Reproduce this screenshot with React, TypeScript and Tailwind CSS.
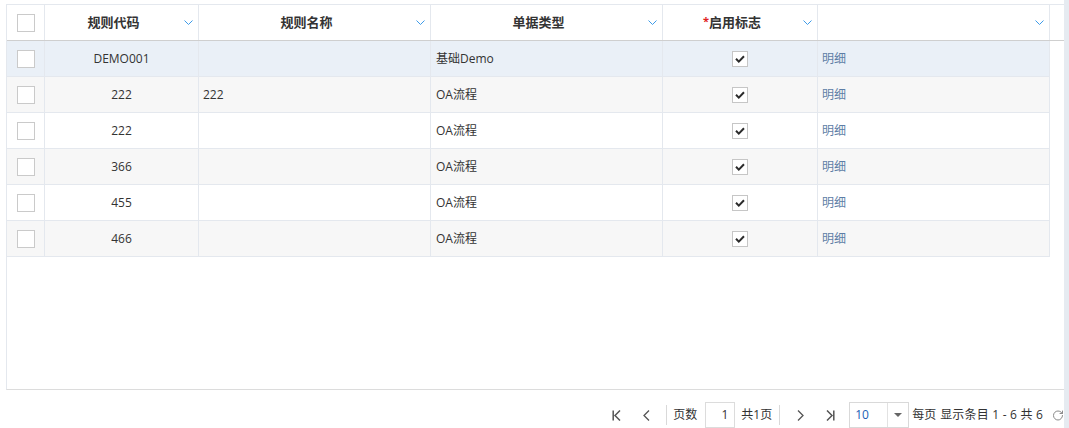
import { RotateCw } from 'lucide-react';

type Row = { code: string; name: string; type: string };

const rows: Row[] = [
  { code: 'DEMO001', name: '', type: '基础Demo' },
  { code: '222', name: '222', type: 'OA流程' },
  { code: '222', name: '', type: 'OA流程' },
  { code: '366', name: '', type: 'OA流程' },
  { code: '455', name: '', type: 'OA流程' },
  { code: '466', name: '', type: 'OA流程' },
];

function SortArrow() {
  return (
    <svg width="9" height="5" viewBox="0 0 9 5" className="ml-[2px] mr-[5px] shrink-0">
      <path d="M0.5 0.5 L4.5 4.5 L8.5 0.5" fill="none" stroke="#3d9be9" strokeWidth="1" />
    </svg>
  );
}

function HeaderCell({ width, children }: { width: string; children?: React.ReactNode }) {
  return (
    <div className={`${width} h-full flex items-center border-r border-[#e4e8ee]`}>
      <span className="flex-1 text-center">{children}</span>
      <SortArrow />
    </div>
  );
}

function Box() {
  return <div className="w-[18px] h-[18px] border border-[#cacaca] bg-white" />;
}

function Checked() {
  return (
    <div className="w-[16px] h-[16px] border border-[#c6c6c6] bg-white flex items-center justify-center">
      <svg width="10" height="8" viewBox="0 0 10 8">
        <path d="M1 3.8 L3.8 6.6 L9 1.3" fill="none" stroke="#2b2b2b" strokeWidth="2" />
      </svg>
    </div>
  );
}

function Sep() {
  return <div className="w-px h-[20px] bg-[#d9d9d9]" />;
}

export default function App() {
  return (
    <div
      className="flex h-[428px] w-full bg-white overflow-hidden text-[#333]"
      style={{ fontFamily: '"Open Sans", "Noto Sans CJK SC", sans-serif' }}
    >
      <div className="flex-1 flex flex-col pt-[4px] pl-[6px] min-w-0">
        <div className="h-[386px] border-l border-t border-b border-t-[#e4e8ee] border-l-[#e4e8ee] border-b-[#dcdcdc] flex flex-col">
          {/* header */}
          <div className="h-[36px] flex border-b border-[#cfcfcf] text-[13px] font-bold bg-white">
            <div className="w-[38px] h-full flex items-center justify-center border-r border-[#e4e8ee]">
              <Box />
            </div>
            <HeaderCell width="w-[154px]">规则代码</HeaderCell>
            <HeaderCell width="w-[232px]">规则名称</HeaderCell>
            <HeaderCell width="w-[232px]">单据类型</HeaderCell>
            <HeaderCell width="w-[155px]">
              <span className="text-[#e02020] text-[11px] align-top">*</span>启用标志
            </HeaderCell>
            <HeaderCell width="w-[232px]" />
            <div className="flex-1" />
          </div>

          {/* body */}
          <div className="flex flex-col text-[12px]">
            {rows.map((r, i) => (
              <div
                key={i}
                className={`h-[36px] w-[1043px] flex border-b border-r border-[#e4e8ee] ${
                  i === 0 ? 'bg-[#eaf0f7]' : i % 2 === 1 ? 'bg-[#f7f7f7]' : 'bg-white'
                }`}
              >
                <div className="w-[38px] flex items-center justify-center border-r border-[#e4e8ee]">
                  <Box />
                </div>
                <div className="w-[154px] flex items-center justify-center border-r border-[#e4e8ee]">{r.code}</div>
                <div className="w-[232px] flex items-center pl-[4px] border-r border-[#e4e8ee]">{r.name}</div>
                <div className="w-[232px] flex items-center pl-[5px] border-r border-[#e4e8ee]">{r.type}</div>
                <div className="w-[155px] flex items-center justify-center border-r border-[#e4e8ee]">
                  <Checked />
                </div>
                <div className="flex-1 flex items-center pl-[4px] text-[#5d7ea6]">明细</div>
              </div>
            ))}
          </div>
        </div>

        {/* pager */}
        <div className="mt-[12px] h-[26px] flex items-center justify-end text-[12px] text-[#333]">
          <div className="w-[20px] flex justify-center">
            <svg width="9" height="11" viewBox="0 0 9 11">
              <path d="M1.2 0.5 V10.5 M8 0.5 L3 5.5 L8 10.5" fill="none" stroke="#555" strokeWidth="1.5" />
            </svg>
          </div>
          <div className="w-[20px] ml-[10px] flex justify-center">
            <svg width="7" height="11" viewBox="0 0 7 11">
              <path d="M6 0.5 L1 5.5 L6 10.5" fill="none" stroke="#555" strokeWidth="1.3" />
            </svg>
          </div>
          <div className="ml-[10px]"><Sep /></div>
          <span className="ml-[6px]">页数</span>
          <div className="ml-[8px] w-[30px] h-[26px] border border-[#dcdcdc] flex items-center justify-end pr-[6px]">1</div>
          <span className="ml-[6px]">共1页</span>
          <div className="ml-[7px]"><Sep /></div>
          <div className="w-[20px] ml-[10px] flex justify-center">
            <svg width="7" height="11" viewBox="0 0 7 11">
              <path d="M1 0.5 L6 5.5 L1 10.5" fill="none" stroke="#555" strokeWidth="1.3" />
            </svg>
          </div>
          <div className="w-[20px] ml-[10px] flex justify-center">
            <svg width="9" height="11" viewBox="0 0 9 11">
              <path d="M1 0.5 L6 5.5 L1 10.5 M7.8 0.5 V10.5" fill="none" stroke="#555" strokeWidth="1.5" />
            </svg>
          </div>
          <div className="ml-[9px] w-[60px] h-[26px] border border-[#d9d9d9] flex">
            <div className="w-[38px] flex items-center pl-[5px] text-[#1c5fb5] border-r border-[#e2e2e2]">10</div>
            <div className="flex-1 flex items-center justify-center">
              <svg width="8" height="4" viewBox="0 0 8 4">
                <path d="M0 0 H8 L4 4 Z" fill="#666" />
              </svg>
            </div>
          </div>
          <span className="ml-[3px]">每页</span>
          <span className="ml-[4px] tracking-[0.2px]">显示条目 1 - 6 共 6</span>
          <div className="ml-[9px] w-[12px] flex items-center">
            <RotateCw size={13} strokeWidth={2} color="#8a8a8a" />
          </div>
        </div>
      </div>
      <div className="w-[5px] h-full bg-[#e6ebf1]" />
    </div>
  );
}
